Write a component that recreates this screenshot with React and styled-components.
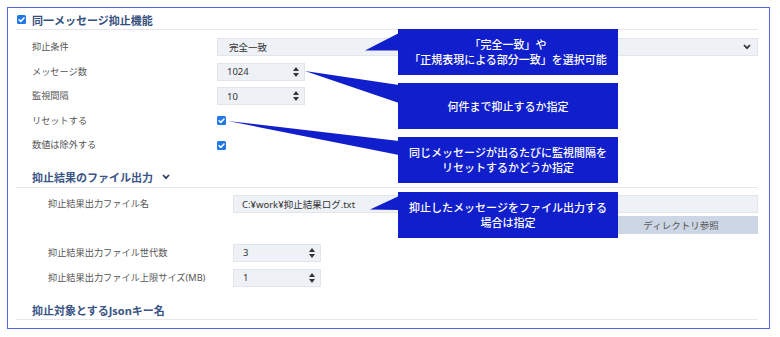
import React from 'react'
import styled, { createGlobalStyle } from 'styled-components'

const GlobalStyle = createGlobalStyle`
    body {
        margin: 0;
        background: #fff;
        font-family: 'Noto Sans', 'Noto Sans CJK JP', sans-serif;
    }
`

const Check = ({size = 9}) => (
    <CHECK $size={size}>
        <svg width={size} height={size} viewBox="0 0 10 10">
            <path d="M2.3 5.2l1.9 1.9 3.6-3.8" fill="none" stroke="#fff" strokeWidth="1.7" strokeLinecap="round" strokeLinejoin="round" />
        </svg>
    </CHECK>
)

const Spinner = () => (
    <svg width="6" height="10" viewBox="0 0 6 10">
        <path d="M3 0L6 4H0Z" fill="#333" />
        <path d="M3 10L0 6H6Z" fill="#333" />
    </svg>
)

const Chevron = ({color = '#333'}) => (
    <svg width="8" height="6" viewBox="0 0 8 6">
        <polyline points="1,1 4,4.2 7,1" fill="none" stroke={color} strokeWidth="1.7" />
    </svg>
)

const NumberBox = ({value}) => (
    <NUMBER>
        <span>{value}</span>
        <Spinner />
    </NUMBER>
)

const callouts = [
    {top: 21, lines: ['「完全一致」や', '「正規表現による部分一致」を選択可能']},
    {top: 75, lines: ['何件まで抑止するか指定']},
    {top: 129, lines: ['同じメッセージが出るたびに監視間隔を', 'リセットするかどうか指定']},
    {top: 184, lines: ['抑止したメッセージをファイル出力する', '場合は指定']},
]

const pointers = [
    '357,42.5 391,25 391,42.5',
    '297,63 391,77 391,95',
    '220,113 391,133 391,147',
    '362,201.5 391,188 391,202',
]

const App = () => {
    const mainRows = [
        {label: '抑止条件', field: <SELECT><span>完全一致</span><Chevron /></SELECT>},
        {label: 'メッセージ数', field: <NumberBox value="1024" />},
        {label: '監視間隔', field: <NumberBox value="10" />},
        {label: 'リセットする', field: <Check />},
        {label: '数値は除外する', field: <Check />},
    ]

    return (
        <PAGE>
            <GlobalStyle />
            <PANEL>
                <HEADER>
                    <Check />
                    <h1>同一メッセージ抑止機能</h1>
                </HEADER>

                <ROWS>
                    {mainRows.map(row => (
                        <ROW key={row.label}>
                            <LABEL>{row.label}</LABEL>
                            {row.field}
                        </ROW>
                    ))}
                </ROWS>

                <SECTION>
                    <h2>抑止結果のファイル出力</h2>
                    <Chevron color="#2c3f66" />
                </SECTION>

                <FILEROW>
                    <LABEL>抑止結果出力ファイル名</LABEL>
                    <FILEFIELD>
                        <TEXTBOX>C:¥work¥抑止結果ログ.txt</TEXTBOX>
                        <BUTTON>ディレクトリ参照</BUTTON>
                    </FILEFIELD>
                </FILEROW>
                <SUBROW>
                    <LABEL>抑止結果出力ファイル世代数</LABEL>
                    <NumberBox value="3" />
                </SUBROW>
                <SUBROW>
                    <LABEL>抑止結果出力ファイル上限サイズ(MB)</LABEL>
                    <NumberBox value="1" />
                </SUBROW>

                <SECTION>
                    <h2>抑止対象とするJsonキー名</h2>
                </SECTION>

                <POINTERS width="763" height="322" viewBox="0 0 763 322">
                    {pointers.map(p => <polygon key={p} points={p} fill="#101ecb" />)}
                </POINTERS>
                {callouts.map(c => (
                    <CALLOUT key={c.top} $top={c.top}>
                        {c.lines.map(l => <span key={l}>{l}</span>)}
                    </CALLOUT>
                ))}
            </PANEL>
        </PAGE>
    )
}

export default App

const PAGE = styled.div`
    padding: 7px 0 0 7px;
`

const PANEL = styled.div`
    position: relative;
    box-sizing: border-box;
    width: 763px;
    height: 322px;
    border: 1px solid #5468e8;
    padding: 2px 11px 0 8px;
    overflow: hidden;
`

const CHECK = styled.span`
    display: inline-flex;
    align-items: center;
    justify-content: center;
    width: ${p => p.$size}px;
    height: ${p => p.$size}px;
    border-radius: 1.5px;
    background: #1f78e6;
`

const HEADER = styled.div`
    display: flex;
    align-items: center;
    gap: 6px;
    height: 19px;
    padding-left: 1px;
    border-bottom: 1px solid #e4e6ea;

    h1 {
        margin: 0;
        font-size: 11px;
        font-weight: 700;
        color: #36507e;
    }
`

const ROWS = styled.div`
    padding-top: 5px;
`

const ROW = styled.div`
    display: grid;
    grid-template-columns: 185px 1fr;
    align-items: center;
    height: 24.5px;
    padding-left: 16px;
`

const LABEL = styled.div`
    font-size: 9.2px;
    color: #555;
    line-height: 18px;
`

const field = `
    box-sizing: border-box;
    height: 18px;
    display: flex;
    align-items: center;
    background: #eef1f6;
    border: 1px solid #e2e6ec;
    font-size: 9.5px;
    color: #333;
`

const SELECT = styled.div`
    ${field}
    justify-content: space-between;
    padding: 0 6px 0 11px;
`

const NUMBER = styled.div`
    ${field}
    width: 88px;
    justify-content: space-between;
    padding: 0 5px 0 9px;
`

const TEXTBOX = styled.div`
    ${field}
    padding-left: 8px;
`

const SECTION = styled.div`
    display: flex;
    align-items: center;
    gap: 9px;
    height: 19px;
    margin-top: 10px;
    padding-left: 16px;
    border-bottom: 1px solid #e4e6ea;

    h2 {
        margin: 0;
        font-size: 11px;
        font-weight: 700;
        color: #3a5485;
    }
`

const FILEROW = styled.div`
    display: grid;
    grid-template-columns: 185px 1fr;
    align-items: start;
    padding: 7px 0 0 32px;
    margin-bottom: 6.5px;
`

const FILEFIELD = styled.div`
    display: flex;
    flex-direction: column;
    align-items: stretch;
    gap: 3px;
`

const BUTTON = styled.div`
    align-self: flex-end;
    width: 154px;
    height: 18px;
    display: flex;
    align-items: center;
    justify-content: center;
    background: #ccd6e4;
    font-size: 9.5px;
    color: #555;
`

const SUBROW = styled(ROW)`
    height: 25px;
    padding-left: 32px;
`

const POINTERS = styled.svg`
    position: absolute;
    left: 0;
    top: 0;
    pointer-events: none;
`

const CALLOUT = styled.div`
    position: absolute;
    left: 390px;
    top: ${p => p.$top}px;
    width: 220px;
    height: 46px;
    display: flex;
    flex-direction: column;
    align-items: center;
    justify-content: center;
    background: #101ecb;
    color: #fff;
    font-size: 11px;
    font-weight: 500;
    line-height: 15px;
    text-align: center;
`
